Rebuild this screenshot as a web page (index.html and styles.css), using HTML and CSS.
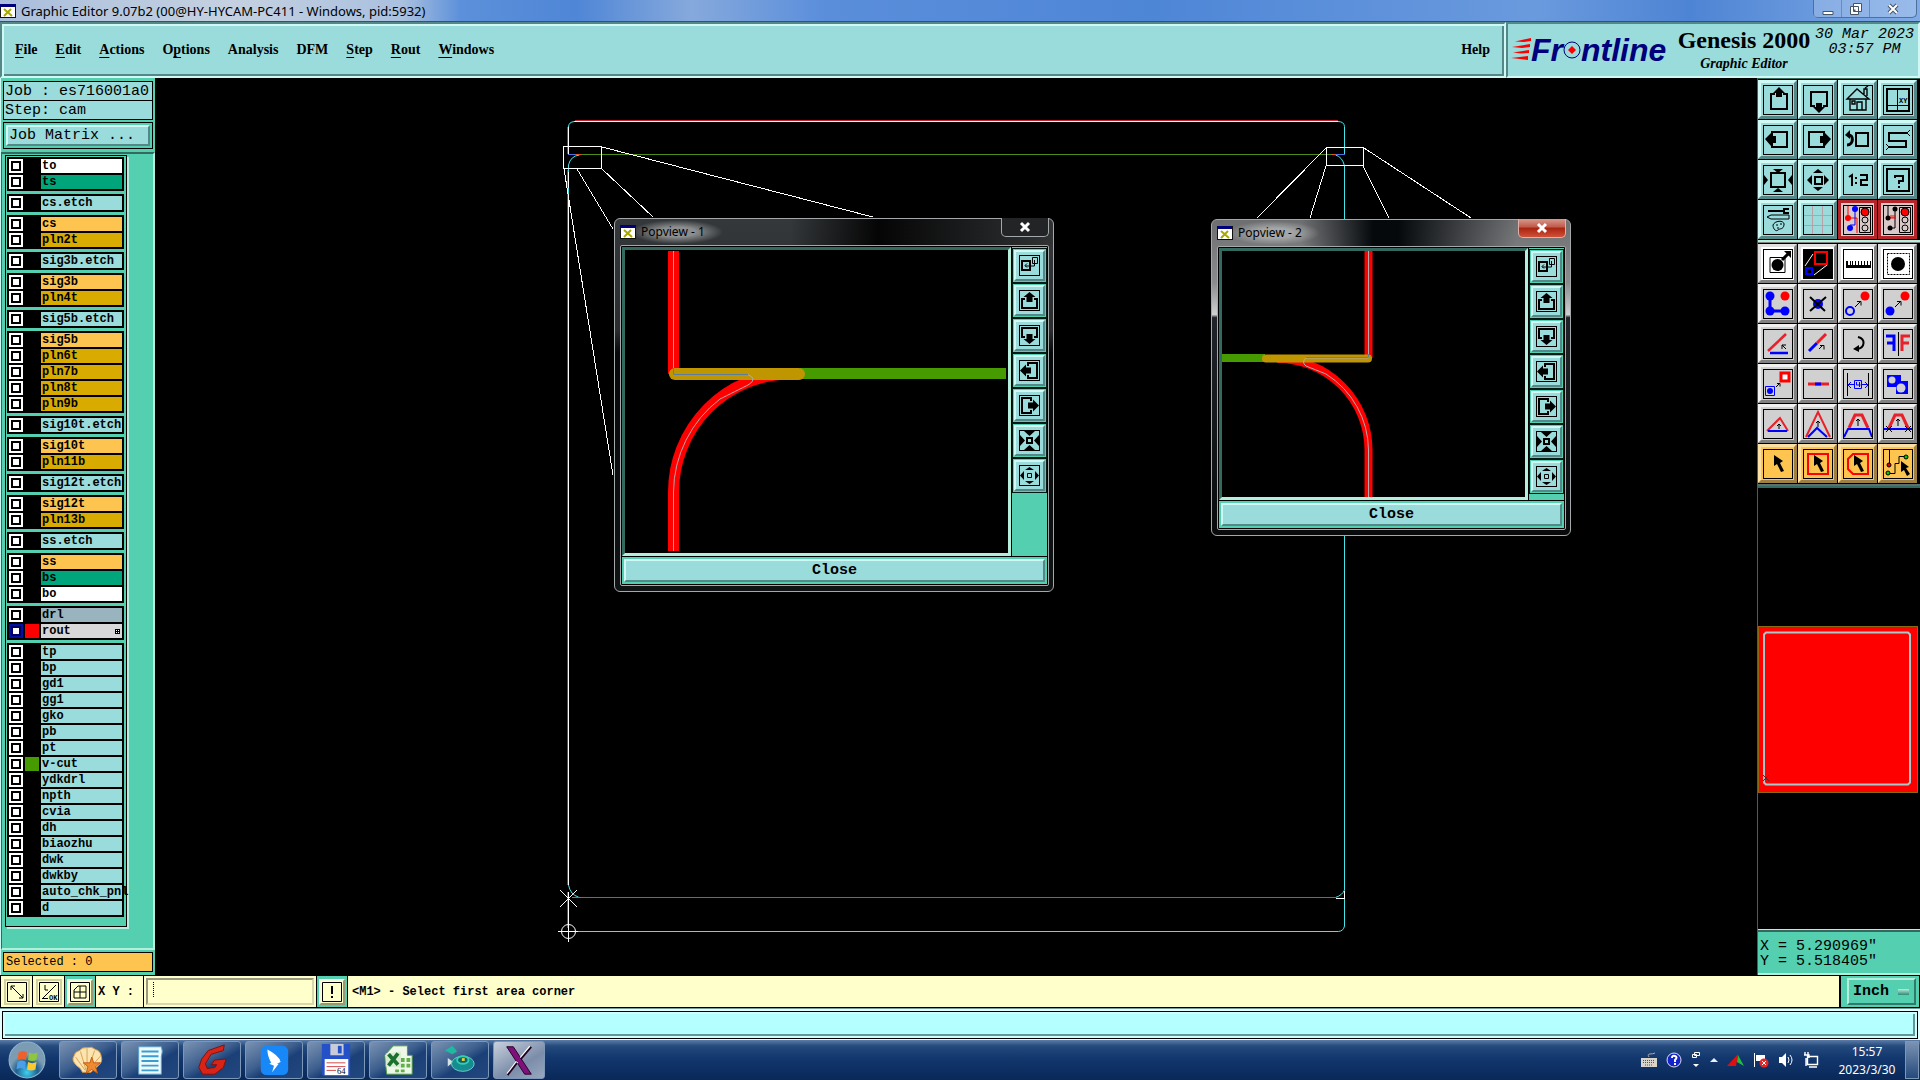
FILE: index.html
```html
<!DOCTYPE html>
<html lang="en">
<head>
<meta charset="utf-8">
<title>Graphic Editor 9.07b2</title>
<link rel="stylesheet" href="styles.css">
</head>
<body>
<svg class="defs" aria-hidden="true">
  <symbol id="xwin" viewBox="0 0 16 14"><path d="M0 0h16v14H0z" fill="#111"/><path d="M0 0h15v3H0z" fill="#00007c"/><path d="M1 3h14v10H1z" fill="#fff"/><path d="M4 5l8 7M11 5l-7 7" stroke="#a8a800" stroke-width="2"/></symbol>
  <symbol id="up" viewBox="0 0 30 30"><path d="M12 9H8v15h16V9h-4" fill="none" stroke="#000" stroke-width="2"/><path d="M16 2l6 6h-3v4h-6V8h-3z"/></symbol>
  <symbol id="down" viewBox="0 0 30 30"><path d="M12 21H8V7h16v14h-4" fill="none" stroke="#000" stroke-width="2"/><path d="M16 28l6-6h-3v-4h-6v4h-3z"/></symbol>
  <symbol id="left" viewBox="0 0 30 30"><path d="M9 11V7h15v15H9v-4" fill="none" stroke="#000" stroke-width="2"/><path d="M2 14l6-6v3h5v7H8v3z"/></symbol>
  <symbol id="right" viewBox="0 0 30 30"><path d="M21 11V7H6v15h15v-4" fill="none" stroke="#000" stroke-width="2"/><path d="M28 14l-6-6v3h-5v7h5v3z"/></symbol>
  <symbol id="pup" viewBox="0 0 21 21"><path d="M6 9H3v9h15V9h-3" fill="none" stroke="#000" stroke-width="2"/><path d="M10.500 2l6 5h-3v5h-6V7h-3z"/></symbol>
  <symbol id="pdown" viewBox="0 0 21 21"><path d="M6 12H3V3h15v9h-3" fill="none" stroke="#000" stroke-width="2"/><path d="M10.500 19l6-5h-3V9h-6v5h-3z"/></symbol>
  <symbol id="pleft" viewBox="0 0 21 21"><path d="M9 6V3h9v15H9v-3" fill="none" stroke="#000" stroke-width="2"/><path d="M1 10.500l6-6v3h5v6H7v3z"/></symbol>
  <symbol id="pright" viewBox="0 0 21 21"><path d="M12 6V3H3v15h9v-3" fill="none" stroke="#000" stroke-width="2"/><path d="M20 10.500l-6-6v3H9v6h5v3z"/></symbol>
  <symbol id="home" viewBox="0 0 30 30"><path d="M7 14v11h16V14M4 14L14 4l12 10zM14 25v-8h5v8M9 16h3v3H9zM21 9V4h3v7M22 3l3-2" fill="none" stroke="#000" stroke-width="1.4"/></symbol>
  <symbol id="back" viewBox="0 0 30 30"><path d="M13 8h12v13H13z" fill="none" stroke="#000" stroke-width="2"/><path d="M5 10c6-1 6 10-1 10" fill="none" stroke="#000" stroke-width="3"/><path d="M2 10l5-5v9z"/></symbol>
  <symbol id="serp" viewBox="0 0 30 30"><path d="M24 8H6v8h17v6H6" fill="none" stroke="#000" stroke-width="2"/><path d="M27 5l-3 3 3 3M3 19l3 3-3 3" fill="none" stroke="#000"/></symbol>
  <symbol id="zin" viewBox="0 0 30 30"><path d="M8 8h14v14H8z" fill="none" stroke="#000" stroke-width="2"/><path d="M10 4h10l-5 4zM10 27h10l-5-4zM1 10v10l4-5zM29 10v10l-4-5z"/></symbol>
  <symbol id="zshrink" viewBox="0 0 21 21"><path d="M8 8h5v5H8z" fill="none" stroke="#000" stroke-width="2"/><path d="M5 1h11l-5.500 5zM5 20h11l-5.500-5zM1 5v11l5-5.500zM20 5v11l-5-5.500z"/></symbol>
  <symbol id="zout" viewBox="0 0 30 30"><path d="M12 12h7v7h-7z" fill="none" stroke="#000" stroke-width="2"/><path d="M10 8h10l-5-4zM10 22h10l-5 4zM9 10v10l-5-5zM21 10v10l5-5z"/></symbol>
  <symbol id="pzout" viewBox="0 0 21 21"><path d="M8.500 8.500h4v4h-4z" fill="none" stroke="#000"/><path d="M6 5h9l-4.500-3zM6 16h9l-4.500 3zM5 6v9l-4-4.500zM16 6v9l4-4.500z"/></symbol>
  <symbol id="ratio" viewBox="0 0 30 30"><path d="M6 12l3-2v11M17 10h7v5h-6v5h7" fill="none" stroke="#000" stroke-width="2"/><path d="M12 12h2v2h-2zM12 17h2v2h-2z"/></symbol>
  <symbol id="help" viewBox="0 0 30 30"><path d="M4 4h22v22H4z" fill="none" stroke="#000" stroke-width="2"/><path d="M12 13v-2h8v5h-4v3" fill="none" stroke="#000" stroke-width="2"/><path d="M15 21h2v2h-2z"/></symbol>
  <symbol id="tools" viewBox="0 0 30 30"><path d="M5 6h15" stroke="#000" stroke-width="2"/><path d="M26 4h-5v4h5" fill="none" stroke="#000" stroke-width="2"/><path d="M4 12l4-2h18v4H8zM10 20c2-5 12-5 11 0s-4 3-6 5-5-1-5-5z" fill="none" stroke="#000"/><path d="M13 20h2M17 19h2M14 23h2" stroke="#000"/></symbol>
  <symbol id="grid" viewBox="0 0 30 30"><path d="M9.500 1v28M19.500 1v28M1 10.500h28M1 20.500h28" stroke="#b8a0a8"/></symbol>
  <symbol id="sig1" viewBox="0 0 30 30"><path d="M5 1v12h9v15" fill="none" stroke="#f00"/><path d="M12 4v16H7" fill="none" stroke="#00f"/><circle cx="5" cy="13" r="3" fill="#f00"/><circle cx="12" cy="4" r="3" fill="#00f"/><circle cx="7" cy="23" r="3" fill="#00f"/><path d="M16.500 2.500h11v25h-11z" fill="none" stroke="#000"/><circle cx="22" cy="7" r="4" fill="#f00" stroke="#000"/><circle cx="22" cy="15" r="3" fill="none" stroke="#000"/><circle cx="22" cy="23" r="3" fill="none" stroke="#000"/></symbol>
  <symbol id="sig2" viewBox="0 0 30 30"><path d="M5 1v12M12 4v19H7" fill="none" stroke="#000"/><path d="M6 13h7M8 10v3M10 10v3M12 10v3" stroke="#f00"/><circle cx="5" cy="13" r="2.500"/><circle cx="12" cy="4" r="2.500"/><circle cx="7" cy="23" r="2.500"/><path d="M16.500 2.500h11v25h-11z" fill="none" stroke="#000"/><circle cx="22" cy="7" r="4" fill="#f00" stroke="#000"/><circle cx="22" cy="15" r="3" fill="none" stroke="#000"/><circle cx="22" cy="23" r="3" fill="none" stroke="#000"/></symbol>
  <symbol id="selarr" viewBox="0 0 30 30"><path d="M7 8.500h15v15H7z" fill="none" stroke="#000"/><circle cx="14.500" cy="16" r="6"/><path d="M19 11l6-6" stroke="#000" stroke-width="3"/><path d="M21 2h7v7z"/></symbol>
  <symbol id="pop" viewBox="0 0 30 30"><path d="M0 0h30v30H0z"/><path d="M10 5L2 17M24 16L11 26" stroke="#fff"/><path d="M12 3h12v12H12z" fill="none" stroke="#f00" stroke-width="2"/><path d="M3 19h6v6H3z" fill="none" stroke="#00f" stroke-width="2"/></symbol>
  <symbol id="ruler" viewBox="0 0 30 30"><path d="M3 19h25v-7h-1v4h-2v-4h-1v4h-2v-4h-1v4h-2v-4h-1v4h-2v-4h-1v4h-2v-4h-1v4h-2v-4h-1v4H8v-4H7v4H5v-4H3z"/></symbol>
  <symbol id="dot" viewBox="0 0 30 30"><path d="M4.500 4.500h22v21h-22z" fill="none" stroke="#000" stroke-dasharray="2 1"/><circle cx="15" cy="15" r="7"/></symbol>
  <symbol id="net" viewBox="0 0 30 30"><path d="M7 7v15h15" fill="none" stroke="#00f" stroke-width="3"/><g fill="#00f"><circle cx="7" cy="7" r="4.500"/><circle cx="7" cy="22" r="4.500"/><circle cx="22" cy="22" r="4.500"/></g><circle cx="22" cy="7" r="4.500" fill="#f00"/></symbol>
  <symbol id="del" viewBox="0 0 30 30"><circle cx="15" cy="15" r="5" fill="#00f"/><path d="M7 8l15 14M23 8L7 22" stroke="#000" stroke-width="2"/></symbol>
  <symbol id="move" viewBox="0 0 30 30"><circle cx="7" cy="22" r="4" fill="none" stroke="#00f" stroke-width="2"/><circle cx="22" cy="7" r="4.500" fill="#f00"/><path d="M12 18l5-5M14 12.500h4v4" fill="none" stroke="#000"/></symbol>
  <symbol id="copy" viewBox="0 0 30 30"><circle cx="7" cy="22" r="4.500" fill="#00f"/><circle cx="22" cy="7" r="4.500" fill="#f00"/><path d="M12 18l5-5M14 12.500h4v4" fill="none" stroke="#000"/></symbol>
  <symbol id="angle" viewBox="0 0 30 30"><path d="M5 22L23 5" stroke="#e8202a" stroke-width="2.500"/><path d="M7 24h18" stroke="#00f" stroke-width="2.500"/><path d="M23 20l-4-4M19 20v-4h4" fill="none" stroke="#000"/></symbol>
  <symbol id="stretch" viewBox="0 0 30 30"><path d="M6 22l8-8" stroke="#00f" stroke-width="3"/><path d="M14 14l9-9" stroke="#e8202a" stroke-width="3"/><path d="M16 20l4-4M17 16.500h4v4" fill="none" stroke="#000"/></symbol>
  <symbol id="rot" viewBox="0 0 30 30"><path d="M15 8c8 2 7 11-1 12" fill="none" stroke="#000" stroke-width="2"/><path d="M10 20l6-4v7z"/></symbol>
  <symbol id="mirror" viewBox="0 0 30 30"><path d="M3 7h8v15M4 14h7" fill="none" stroke="#00f" stroke-width="3"/><path d="M27 7h-8v15M26 14h-7" fill="none" stroke="#e8202a" stroke-width="3"/><path d="M15.500 3v24" stroke="#000"/></symbol>
  <symbol id="resize" viewBox="0 0 30 30"><path d="M18 4h8v8h-8z" fill="#fff" stroke="#f00" stroke-width="3"/><path d="M2.500 17.500h9v9h-9z" fill="none" stroke="#00f"/><circle cx="7" cy="22" r="3" fill="#00f"/><path d="M13 18l3-3M14 14.500h3v3" fill="none" stroke="#000"/></symbol>
  <symbol id="line" viewBox="0 0 30 30"><path d="M5 15h21" stroke="#e8202a" stroke-width="3"/><path d="M12 15h6" stroke="#00f" stroke-width="3"/></symbol>
  <symbol id="gap" viewBox="0 0 30 30"><path d="M4.500 4v23M25.500 4v23" stroke="#000"/><path d="M11.500 11.500h7v8h-7zM5 15.500h6M19 15.500h6M8 13l-3 3 3 3M22 13l3 3-3 3M13.500 13v3h4M16.500 13v5" fill="none" stroke="#00f"/></symbol>
  <symbol id="union" viewBox="0 0 30 30"><path d="M4 6h14v6h7v13H13v-7H4z" fill="#00f"/><circle cx="9" cy="11" r="3.500" fill="#d0d0d0"/><circle cx="18" cy="19" r="4.500" fill="#d0d0d0"/></symbol>
  <symbol id="tri" viewBox="0 0 30 30"><path d="M4 22L17 9l8 13" fill="none" stroke="#e8202a" stroke-width="2"/><path d="M5 22h19" stroke="#00f" stroke-width="2"/><path d="M16 20v-5M14 17l2-2 2 2" fill="none" stroke="#000"/></symbol>
  <symbol id="peak" viewBox="0 0 30 30"><path d="M3 28L15 3l12 25" fill="none" stroke="#e8202a" stroke-width="2"/><path d="M5 28l9-9 10 9" fill="none" stroke="#00f" stroke-width="2"/><path d="M15 18v-6M13 14l2-2 2 2" fill="none" stroke="#000"/></symbol>
  <symbol id="trap" viewBox="0 0 30 30"><path d="M6 19l6-13h7l6 13" fill="none" stroke="#e8202a" stroke-width="3"/><path d="M1 28l4-8h21l3 8" fill="none" stroke="#00f" stroke-width="2"/><path d="M15 17v-7M13 12l2-2 2 2" fill="none" stroke="#000"/></symbol>
  <symbol id="trapx" viewBox="0 0 30 30"><path d="M6 19l6-13h7l6 13" fill="none" stroke="#e8202a" stroke-width="3"/><path d="M1 20h28" stroke="#00f" stroke-width="2"/><path d="M15 17v-7M13 12l2-2 2 2M3 17l6 6M9 17l-6 6M22 17l6 6M28 17l-6 6" fill="none" stroke="#000"/></symbol>
  <symbol id="cur" viewBox="0 0 30 30"><path d="M11 6l9 6-3 2 4 8-3 1-4-8-3 2z"/></symbol>
  <symbol id="curbox" viewBox="0 0 30 30"><path d="M5 5h20v20H5z" fill="none" stroke="#f00" stroke-width="2"/><path d="M11 6l9 6-3 2 4 8-3 1-4-8-3 2z"/></symbol>
  <symbol id="curpoly" viewBox="0 0 30 30"><path d="M10 5h15v20H10l-5-5V10z" fill="none" stroke="#f00" stroke-width="2"/><path d="M11 6l9 6-3 2 4 8-3 1-4-8-3 2z"/></symbol>
  <symbol id="curnet" viewBox="0 0 30 30"><path d="M6.500 1v14M6 24.500h6v-10h4V7.500h6" fill="none" stroke="#000"/><circle cx="6" cy="16" r="2" fill="#d00" stroke="#000"/><circle cx="5" cy="24" r="2" fill="#0c0" stroke="#000"/><circle cx="23" cy="8" r="2" fill="#0c0" stroke="#000"/><path d="M18 12l8 6-3 1 4 6-3 2-3-6-3 2z"/></symbol>
  <symbol id="link" viewBox="0 0 21 21"><path d="M3 6h8v9H3z" fill="none" stroke="#000" stroke-width="2"/><path d="M13.500 2.500h5v6h-5zM15.500 5v6H6M8 8.500l-2 2 2 2" fill="none" stroke="#000"/></symbol>
</svg>

<header class="titlebar">
  <svg class="app-icon"><use href="#xwin"/></svg>
  <h1>Graphic Editor 9.07b2 (00@HY-HYCAM-PC411 - Windows, pid:5932)</h1>
  <div class="win-controls">
    <button aria-label="Minimize"><svg width="12" height="12"><path d="M1 8.500h10v3H1z" fill="#fff" stroke="#456"/></svg></button>
    <button aria-label="Restore"><svg width="12" height="12"><path d="M3.500.5h8v8h-8zM.5 3.500h8v8h-8z" fill="#fff" stroke="#456"/><path d="M3.500 6.500h2v2h-2z" fill="#456"/></svg></button>
    <button class="wide" aria-label="Close"><svg width="12" height="12"><path d="M2 2l8 8M10 2l-8 8" stroke="#456" stroke-width="4"/><path d="M2 2l8 8M10 2l-8 8" stroke="#fff" stroke-width="2"/></svg></button>
  </div>
</header>

<div class="topbar">
  <nav class="menubar">
    <a href="#"><u>F</u>ile</a><a href="#"><u>E</u>dit</a><a href="#"><u>A</u>ctions</a><a href="#">O<u>p</u>tions</a><a href="#">Analysis</a><a href="#">DFM</a><a href="#"><u>S</u>tep</a><a href="#"><u>R</u>out</a><a href="#"><u>W</u>indows</a><a class="menu-help" href="#">Help</a>
  </nav>
  <div class="brand">
    <div class="logo">
      <svg width="20" height="24" fill="#f00"><path d="M4 3.500L20 0v3l-7 1zM1 9l18-3v3l-8 1zM2 14.500L18 12v3l-8 .5zM0 20l17-2v4l-8-1z"/></svg>
      <span>Fr<svg width="18" height="26" viewBox="0 0 18 26"><circle cx="9" cy="13" r="8" fill="none" stroke="#00007c"/><path d="M9 9l4 4-4 4-4-4z" fill="#f00"/></svg>ntline</span>
    </div>
    <div class="product"><strong>Genesis 2000</strong><em>Graphic Editor</em></div>
    <div class="date">30 Mar 2023<br>03:57 PM</div>
  </div>
</div>

<main class="workspace">
  <aside class="layers-panel">
    <div class="job"><p>Job : es716001a0</p><p>Step: cam</p></div>
    <div class="matrix"><button>Job Matrix ...</button></div>
    <div class="layer-well">
      <div class="layer-list">
        <div class="group">
          <label class="layer white"><input type="checkbox"><i></i><span>to</span></label>
          <label class="layer green"><input type="checkbox"><i></i><span>ts</span></label>
        </div>
        <div class="group"><label class="layer"><input type="checkbox"><i></i><span>cs.etch</span></label></div>
        <div class="group">
          <label class="layer amber"><input type="checkbox"><i></i><span>cs</span></label>
          <label class="layer gold"><input type="checkbox"><i></i><span>pln2t</span></label>
        </div>
        <div class="group"><label class="layer"><input type="checkbox"><i></i><span>sig3b.etch</span></label></div>
        <div class="group">
          <label class="layer amber"><input type="checkbox"><i></i><span>sig3b</span></label>
          <label class="layer gold"><input type="checkbox"><i></i><span>pln4t</span></label>
        </div>
        <div class="group"><label class="layer"><input type="checkbox"><i></i><span>sig5b.etch</span></label></div>
        <div class="group">
          <label class="layer amber"><input type="checkbox"><i></i><span>sig5b</span></label>
          <label class="layer gold"><input type="checkbox"><i></i><span>pln6t</span></label>
          <label class="layer gold"><input type="checkbox"><i></i><span>pln7b</span></label>
          <label class="layer gold"><input type="checkbox"><i></i><span>pln8t</span></label>
          <label class="layer gold"><input type="checkbox"><i></i><span>pln9b</span></label>
        </div>
        <div class="group"><label class="layer"><input type="checkbox"><i></i><span>sig10t.etch</span></label></div>
        <div class="group">
          <label class="layer amber"><input type="checkbox"><i></i><span>sig10t</span></label>
          <label class="layer gold"><input type="checkbox"><i></i><span>pln11b</span></label>
        </div>
        <div class="group"><label class="layer"><input type="checkbox"><i></i><span>sig12t.etch</span></label></div>
        <div class="group">
          <label class="layer amber"><input type="checkbox"><i></i><span>sig12t</span></label>
          <label class="layer gold"><input type="checkbox"><i></i><span>pln13b</span></label>
        </div>
        <div class="group"><label class="layer"><input type="checkbox"><i></i><span>ss.etch</span></label></div>
        <div class="group">
          <label class="layer amber"><input type="checkbox"><i></i><span>ss</span></label>
          <label class="layer green"><input type="checkbox"><i></i><span>bs</span></label>
          <label class="layer white"><input type="checkbox"><i></i><span>bo</span></label>
        </div>
        <div class="group">
          <label class="layer slate"><input type="checkbox"><i></i><span>drl</span></label>
          <label class="layer grey"><input type="checkbox" checked><i class="red"></i><span>rout<svg width="5" height="5" viewBox="0 0 5 5"><path d="M0 0h5v5H0z"/><path d="M1 1h1v1H1zM3 1h1v1H3zM1 3h1v1H1zM3 3h1v1H3z" fill="#fff"/></svg></span></label>
        </div>
        <div class="group">
          <label class="layer"><input type="checkbox"><i></i><span>tp</span></label>
          <label class="layer"><input type="checkbox"><i></i><span>bp</span></label>
          <label class="layer"><input type="checkbox"><i></i><span>gd1</span></label>
          <label class="layer"><input type="checkbox"><i></i><span>gg1</span></label>
          <label class="layer"><input type="checkbox"><i></i><span>gko</span></label>
          <label class="layer"><input type="checkbox"><i></i><span>pb</span></label>
          <label class="layer"><input type="checkbox"><i></i><span>pt</span></label>
          <label class="layer"><input type="checkbox"><i class="lime"></i><span>v-cut</span></label>
          <label class="layer"><input type="checkbox"><i></i><span>ydkdrl</span></label>
          <label class="layer"><input type="checkbox"><i></i><span>npth</span></label>
          <label class="layer"><input type="checkbox"><i></i><span>cvia</span></label>
          <label class="layer"><input type="checkbox"><i></i><span>dh</span></label>
          <label class="layer"><input type="checkbox"><i></i><span>biaozhu</span></label>
          <label class="layer"><input type="checkbox"><i></i><span>dwk</span></label>
          <label class="layer"><input type="checkbox"><i></i><span>dwkby</span></label>
          <label class="layer"><input type="checkbox"><i></i><span>auto_chk_pnl</span></label>
          <label class="layer"><input type="checkbox"><i></i><span>d</span></label>
        </div>
      </div>
    </div>
    <p class="selected">Selected : 0</p>
  </aside>

  <section class="canvas">
    <svg class="board" viewBox="156 78 1601 897" preserveAspectRatio="xMinYMin meet" fill="none">
      <g stroke="#c8202c"><path d="M575 120.500H1338M567.500 127V154M567.500 170V885M567.500 892V928"/></g>
      <g stroke="#fff"><path d="M574 121.500H1338M568.500 126V154M568.500 168V885M568.500 892V928"/></g>
      <g stroke="#44e4ea"><path d="M568.500 127q0-5 6-5.500M1338 121.500q6 0 6.500 5V154M568.500 172V165q2-9 11-10M1344.500 172V890q-2 5-9 7.500M568.500 885q2 10 10 12M1344.500 897V926q-1 5-6 5.500H568M1344.500 172v-6q-2-9-9-11M568.500 188v8"/></g>
      <path d="M580 154.500H1333M578 897.500H1336" stroke="#4b8c1c"/>
      <path d="M568 154.500h8M1336 154.500h9" stroke="#5070e0"/>
      <path d="M576 154.500h5M1331 154.500h5M572 897.500h9" stroke="#e05020"/>
      <g stroke="#fff" shape-rendering="crispEdges">
        <path d="M563.500 146.500h38v22h-38zM1326.500 147.500h37v18h-37z"/>
        <path d="M602 147L873 217M602 169L653 217M577 169L613 229M564 169L613 475M1326 148L1257 218M1326 166L1310 218M1363 166L1389 218M1364 148L1471 218"/>
        <path d="M560 890l17 17M577 890l-17 17M558 931.500h20M568.500 921v21M1336 898.500h8v-8"/>
      </g>
      <circle cx="568.500" cy="931.500" r="7" stroke="#fff"/>
    </svg>

    <article class="popview pop1">
      <header><svg class="app-icon"><use href="#xwin"/></svg><h2>Popview - 1</h2><button class="pop-x" aria-label="Close window"><svg width="12" height="12"><path d="M2 2l8 8M10 2l-8 8" stroke="#fff" stroke-width="3"/></svg></button></header>
      <div class="pop-client">
        <div class="pop-body">
          <svg class="pop-view" viewBox="625 250 383 303" preserveAspectRatio="xMinYMin slice" fill="none">
            <path d="M673.500 251V374M673.500 551V492A117 118 0 0 1 790 374" stroke="#f00" stroke-width="11"/>
            <path d="M800 373.500H1006" stroke="#459b00" stroke-width="11"/>
            <path d="M675 374H799" stroke="#bf9600" stroke-width="12" stroke-linecap="round"/>
            <path d="M673.500 551V492A117 118 0 0 1 720 399L748 385q7-4 4-8l-4-2.500H673.500V251" stroke="#b4a9a9"/>
            <path d="M748 374.500H673.500V368" stroke="#5a7ca0"/>
          </svg>
          <div class="pop-tools">
            <button aria-label="Link"><svg><use href="#link"/></svg></button><button aria-label="Up"><svg><use href="#pup"/></svg></button><button aria-label="Down"><svg><use href="#pdown"/></svg></button><button aria-label="Left"><svg><use href="#pleft"/></svg></button><button aria-label="Right"><svg><use href="#pright"/></svg></button><button aria-label="Zoom in"><svg><use href="#zshrink"/></svg></button><button aria-label="Zoom out"><svg><use href="#pzout"/></svg></button>
          </div>
        </div>
        <div class="pop-foot"><button>Close</button></div>
      </div>
    </article>

    <article class="popview pop2">
      <header><svg class="app-icon"><use href="#xwin"/></svg><h2>Popview - 2</h2><button class="pop-x hot" aria-label="Close window"><svg width="12" height="12"><path d="M2 2l8 8M10 2l-8 8" stroke="#fff" stroke-width="3"/></svg></button></header>
      <div class="pop-client">
        <div class="pop-body">
          <svg class="pop-view" viewBox="1223 252 303 246" preserveAspectRatio="xMinYMin slice" fill="none">
            <path d="M1369.500 252V359M1369.500 498V451A91 91 0 0 0 1278 360" stroke="#f00" stroke-width="8"/>
            <path d="M1223 359H1266" stroke="#459b00" stroke-width="8"/>
            <path d="M1267 359.500H1369" stroke="#bf9600" stroke-width="8" stroke-linecap="round"/>
            <path d="M1369.500 498V451A91 91 0 0 0 1327 375L1307 367q-5-4 0-8h62.500V252" stroke="#b4a9a9"/>
            <path d="M1307 358.500h62.500V355" stroke="#6a8088"/>
          </svg>
          <div class="pop-tools">
            <button aria-label="Link"><svg><use href="#link"/></svg></button><button aria-label="Up"><svg><use href="#pup"/></svg></button><button aria-label="Down"><svg><use href="#pdown"/></svg></button><button aria-label="Left"><svg><use href="#pleft"/></svg></button><button aria-label="Right"><svg><use href="#pright"/></svg></button><button aria-label="Zoom in"><svg><use href="#zshrink"/></svg></button><button aria-label="Zoom out"><svg><use href="#pzout"/></svg></button>
          </div>
        </div>
        <div class="pop-foot"><button>Close</button></div>
      </div>
    </article>
  </section>

  <aside class="tools-panel">
    <div class="tools">
      <button aria-label="Pan up"><svg><use href="#up"/></svg></button><button aria-label="Pan down"><svg><use href="#down"/></svg></button><button aria-label="Home"><svg><use href="#home"/></svg></button><button aria-label="Zoom to XY"><svg viewBox="0 0 30 30"><path d="M4 4h22v22H4z" fill="none" stroke="#000" stroke-width="2"/><path d="M14.500 4v22M4 20.500h22" stroke="#000"/><text x="16" y="18" font-size="7">XY</text></svg></button>
      <button aria-label="Pan left"><svg><use href="#left"/></svg></button><button aria-label="Pan right"><svg><use href="#right"/></svg></button><button aria-label="Previous view"><svg><use href="#back"/></svg></button><button aria-label="Serpentine"><svg><use href="#serp"/></svg></button>
      <button aria-label="Zoom in"><svg><use href="#zin"/></svg></button><button aria-label="Zoom out"><svg><use href="#zout"/></svg></button><button aria-label="Scale"><svg><use href="#ratio"/></svg></button><button aria-label="Help"><svg><use href="#help"/></svg></button>
      <button aria-label="Setup"><svg><use href="#tools"/></svg></button><button aria-label="Grid"><svg><use href="#grid"/></svg></button><button class="alert" aria-label="Online nets"><svg><use href="#sig1"/></svg></button><button class="alert" aria-label="Online checks"><svg><use href="#sig2"/></svg></button>
    </div>
    <div class="tools edit">
      <button class="plain" aria-label="Select"><svg><use href="#selarr"/></svg></button><button class="plain" aria-label="Popview"><svg><use href="#pop"/></svg></button><button class="plain" aria-label="Measure"><svg><use href="#ruler"/></svg></button><button class="plain" aria-label="Highlight"><svg><use href="#dot"/></svg></button>
      <button aria-label="Add"><svg><use href="#net"/></svg></button><button aria-label="Delete"><svg><use href="#del"/></svg></button><button aria-label="Move"><svg><use href="#move"/></svg></button><button aria-label="Copy"><svg><use href="#copy"/></svg></button>
      <button aria-label="Angle"><svg><use href="#angle"/></svg></button><button aria-label="Stretch"><svg><use href="#stretch"/></svg></button><button aria-label="Rotate"><svg><use href="#rot"/></svg></button><button aria-label="Mirror"><svg><use href="#mirror"/></svg></button>
      <button aria-label="Resize"><svg><use href="#resize"/></svg></button><button aria-label="Break"><svg><use href="#line"/></svg></button><button aria-label="Spacing"><svg><use href="#gap"/></svg></button><button aria-label="Combine"><svg><use href="#union"/></svg></button>
      <button aria-label="Triangle"><svg><use href="#tri"/></svg></button><button aria-label="Peak"><svg><use href="#peak"/></svg></button><button aria-label="Trapezoid"><svg><use href="#trap"/></svg></button><button aria-label="Cut trapezoid"><svg><use href="#trapx"/></svg></button>
      <button class="pick" aria-label="Pick"><svg><use href="#cur"/></svg></button><button class="pick" aria-label="Pick in box"><svg><use href="#curbox"/></svg></button><button class="pick" aria-label="Pick in polygon"><svg><use href="#curpoly"/></svg></button><button class="pick" aria-label="Pick net"><svg><use href="#curnet"/></svg></button>
    </div>
    <div class="overview">
      <svg viewBox="0 0 160 167" fill="none"><path d="M0 0h160v167H0z" fill="#f00"/><path d="M.5.500h159v166H.5z" stroke="#8a6a10"/><path d="M8 6.500h142l2 2v148l-2 2H8l-2-2v-148z" stroke="#a8c8cc" stroke-width="2"/><path d="M5 149l6 6M11 149l-6 6" stroke="#602020"/></svg>
    </div>
    <div class="coords">X = 5.290969"<br>Y = 5.518405"</div>
  </aside>
</main>

<form class="prompt">
  <button type="button" class="mode" aria-label="Absolute"><svg viewBox="0 0 20 20"><path d="M.5.500h19v19H.5zM4 4l12 12M4 8V4h4M16 12v4h-4" fill="none" stroke="#000"/></svg></button>
  <button type="button" class="mode" aria-label="Angle snap"><svg viewBox="0 0 20 20"><path d="M.5.500h19v19H.5zM3 17L17 3M3 16.500h6M6 3v5h3" fill="none" stroke="#000"/><text x="10" y="18" font-size="7">OK</text></svg></button>
  <button type="button" class="mode boxed" aria-label="Grid snap"><svg viewBox="0 0 20 20"><path d="M.5.500h19v19H.5zM8 4h8v12H4V8zM10 4v12M4 10h12" fill="none" stroke="#000"/></svg></button>
  <label for="xy-in">X Y :</label>
  <div class="entry"><input id="xy-in" type="text"></div>
  <button type="button" class="mode boxed" aria-label="Alert"><svg viewBox="0 0 20 20"><path d="M.5.500h19v19H.5z" fill="none" stroke="#000"/><path d="M9 4h2v8H9zM9 14h2v2H9z"/></svg></button>
  <output>&lt;M1&gt; - Select first area corner</output>
  <div class="units"><select aria-label="Units"><option>Inch</option></select></div>
</form>
<div class="status"><div><p></p></div></div>

<footer class="taskbar">
  <button class="orb" aria-label="Start"><svg viewBox="0 0 36 36"><defs><radialGradient id="og" cy=".85"><stop offset="0" stop-color="#3fd0f0"/><stop offset=".6" stop-color="#20608f"/><stop offset="1" stop-color="#7c9cb4"/></radialGradient></defs><circle cx="18" cy="18" r="17" fill="url(#og)" stroke="#8fb4cc"/><path d="M10 11q4-3 8 0l-1 7q-4-2-8 0z" fill="#f0602a"/><path d="M20 11q4 2 8 0l-1 7q-4 2-8 0z" fill="#8ec63f"/><path d="M9 20q4-3 8 0l-1 7q-4-3-8 0z" fill="#4aa0e8"/><path d="M19 20q4 2 8 0l-1 7q-4 2-8 0z" fill="#fcc830"/></svg></button>
  <button aria-label="Shell"><svg viewBox="0 0 36 36"><path d="M12 31q-1-4-6-7Q0 18 3 14q1-5 6-6 3-4 8-3 5-2 9 2 5 1 6 7 2 6-3 10-5 4-8 7z" fill="#fbe4b0" stroke="#d89a40"/><path d="M15 29L5 15M16 29L10 9M17 28L17 6M18 28L25 8M19 28L31 14" stroke="#d8a050"/><path d="M22 15l2 6 7 0-5 4 2 7-6-4-6 4 2-7-5-4 7 0z" fill="#f08a30" stroke="#c05a14"/></svg></button>
  <button aria-label="Notes"><svg viewBox="0 0 36 36"><path d="M6 4h24q2 5 0 10v19H6z" fill="#eafaff" stroke="#5aa0c8"/><path d="M9 9h18M9 14h18M9 19h18M9 24h18M9 29h18" stroke="#3c9cd0" stroke-width="2"/></svg></button>
  <button aria-label="Genesis"><svg viewBox="0 0 36 36"><path d="M31 2L30 8 17 12 11 22l2 5 8-1 2-3h-6l4-5 12-1-3 9-9 7H8L4 26 7 17 14 8z" fill="#d82418" stroke="#801008"/></svg></button>
  <button aria-label="DingTalk"><svg viewBox="0 0 36 36"><rect x="4" y="3" width="29" height="31" rx="6" fill="#1888f8"/><path d="M11 7q12 6 14 13l-4 2 2 0-7 9 2-7-5-2 2-1q-4-7-4-14z" fill="#fff"/></svg></button>
  <button aria-label="Save tool"><svg viewBox="0 0 36 36"><path d="M3 1h30v34H5l-2-2z" fill="#2450c8"/><path d="M12 1h14v12H12z" fill="#c8ccd8"/><path d="M20 3h4v8h-4z" fill="#2450c8"/><path d="M6 17h25v17H6z" fill="#fff"/><path d="M8 21h20M8 25h20M8 29h10" stroke="#d04040"/><text x="19" y="33" font-size="9">64</text></svg></button>
  <button aria-label="Excel"><svg viewBox="0 0 36 36"><path d="M4 13L13 3h15v10h5v20H6z" fill="#eef8e8" stroke="#4c9a40"/><path d="M21 16h4v4h-4zM27 16h4v4h-4zM21 22h4v4h-4zM27 22h4v4h-4zM15 28h4v3h-4zM21 28h4v3h-4z" fill="#60b048"/><path d="M5 11l16-2v17L5 25z" fill="#d8ecd0"/><path d="M8 12l10 11M18 11L8 24" stroke="#1c7030" stroke-width="4"/></svg></button>
  <button aria-label="CAM tool"><svg viewBox="0 0 36 36"><path d="M2 8l8-5 5 6-5 3z" fill="#20b8a0"/><path d="M5 16l6 4-6 5z" fill="#d0e4e4"/><ellipse cx="21" cy="22" rx="12" ry="8" fill="#148c90" stroke="#70d0c8"/><ellipse cx="21" cy="18" rx="6" ry="4" fill="#106068" stroke="#30d0b0" stroke-width="2"/><path d="M20 19v-3h3v3z" fill="#e8d040"/></svg></button>
  <button class="active" aria-label="X server"><svg viewBox="0 0 36 36"><path d="M5 4h7l19 29h-7z" fill="#80107c" stroke="#200020"/><path d="M30 4L20 16M16 20L6 33" stroke="#fff" stroke-width="3"/><path d="M31 4L20 17M16 21L6 34" stroke="#200020" stroke-width="2"/></svg></button>
  <div class="tray">
    <svg width="16" height="16"><path d="M0 6h16v9H0z" fill="#d8d4cc"/><path d="M2 8.500h12M2 10.500h12M4 13h8" stroke="#555" stroke-dasharray="1 1"/><path d="M8 5q-2-3 1-3t5-1" fill="none" stroke="#aaa"/></svg>
    <svg width="16" height="16"><circle cx="8" cy="8" r="7" fill="#1424c8" stroke="#dde"/><path d="M6 6q0-3 3-2t0 4v2" fill="none" stroke="#fff" stroke-width="2"/><path d="M8 11h2v2H8z" fill="#fff"/></svg>
    <svg width="10" height="18"><path d="M3.500 1.500h5v3h-5zM1.500 3.500h4v3h-4z" fill="none" stroke="#fff"/><path d="M2 13h6l-3 3z" fill="#fff"/></svg>
    <svg width="8" height="6"><path d="M0 5l4-4 4 4z" fill="#e8f0ff"/></svg>
    <svg width="17" height="14"><path d="M0 13L11 1 9 13z" fill="#e01010"/><path d="M11 2l6 11-7-4z" fill="#20c040"/></svg>
    <svg width="16" height="16"><path d="M1.500 1v14" stroke="#fff"/><path d="M3 3h9v6H3z" fill="#fff"/><circle cx="11" cy="11" r="4.500" fill="#e02828"/><path d="M9 9l4 4M13 9l-4 4" stroke="#fff"/></svg>
    <svg width="16" height="16"><path d="M1 5h3l4-4v14l-4-4H1z" fill="#fff"/><path d="M10 5q2 3 0 6M12 3q4 5 0 10" fill="none" stroke="#fff"/></svg>
    <svg width="16" height="16"><path d="M4.500 4.500h10v8h-10zM6 15h8M1 3h5v3M2 0v3M5 0v3M3 6v8" fill="none" stroke="#fff" stroke-width="1.400"/></svg>
  </div>
  <time>15:57<br>2023/3/30</time>
  <button class="peek" aria-label="Show desktop"></button>
</footer>
</body>
</html>
```

FILE: styles.css
```css
:root {
  --teal: #54cfb0;
  --teal-light: #b4eedd;
  --teal-dark: #33695e;
  --aqua: #9adbdb;
  --aqua-light: #d0f8f4;
  --aqua-dark: #548888;
  --cream: #ffffcc;
  --amber: #fdc44f;
  --mono: "Liberation Mono", monospace;
  --serif: "Liberation Serif", serif;
  --ui: "Noto Sans", sans-serif;
}

*, *::before { box-sizing: border-box; }

body {
  margin: 0;
  min-height: 100vh;
  display: flex;
  flex-direction: column;
  background: #000;
  color: #000;
}

h1, h2, p { margin: 0; font-weight: normal; }
button { padding: 0; font: inherit; color: inherit; }
svg { display: block; }
.defs { position: absolute; width: 0; height: 0; }
.app-icon { width: 16px; height: 14px; }

/* Title bar */
.titlebar {
  display: flex;
  align-items: center;
  gap: 5px;
  height: 22px;
  background: linear-gradient(90deg, #a9bedd 0, #c5d1e0 12%, #a9c0df 21%, #5c90da 24%, #4f86d6 30%, #86a9dc 36%, #5a8edb 43%, #4e86d6 60%, #6a9ade 80%, #4e84d4 88%, #80abe6 100%);
  border-bottom: 1px solid #35507a;
}
.titlebar h1 { font: 13px/20px var(--ui); }
.win-controls {
  display: flex;
  align-self: flex-start;
  margin-left: auto;
  margin-right: 3px;
  border: 1px solid #50709c;
  border-top: 0;
  border-radius: 0 0 5px 5px;
}
.win-controls button {
  display: grid;
  place-items: center;
  width: 28px;
  height: 17px;
  border: 0;
  border-right: 1px solid #6a8cba;
  background: rgb(255 255 255 / 20%);
}
.win-controls .wide { width: 46px; border-right: 0; border-radius: 0 0 5px 0; }

/* Menu bar and brand */
.topbar { display: flex; height: 56px; background: var(--aqua-light); }
.menubar, .brand {
  display: flex;
  align-items: center;
  background: var(--aqua);
  border: 2px solid var(--aqua-dark);
  border-right-color: var(--aqua-light);
  border-bottom-color: var(--aqua-light);
}
.menubar {
  flex: 1;
  gap: 18px;
  padding: 0 14px 0 13px;
  font: bold 14px/20px var(--serif);
  box-shadow: inset 2px 2px #d0f8f4, inset -2px -2px #548888;
}
.menubar a { color: #000; text-decoration: none; }
.menubar u { text-underline-offset: 3px; text-decoration-thickness: 1px; }
.menubar .menu-help { margin-left: auto; }
.brand { width: 414px; padding-left: 3px; }
.logo { display: flex; align-items: center; width: 166px; }
.logo > svg { flex: none; }
.logo span {
  display: flex;
  align-items: center;
  font: italic bold 32px/32px "Liberation Sans", sans-serif;
  color: #00007c;
}
.product { display: flex; flex-direction: column; align-items: center; width: 134px; }
.product strong { font: bold 24px/28px var(--serif); white-space: nowrap; }
.product em { font: italic bold 14px/20px var(--serif); }
.date {
  align-self: flex-start;
  flex: 1;
  padding-top: 3px;
  text-align: center;
  white-space: nowrap;
  font: italic 15px/15px var(--mono);
}

/* Workspace */
.workspace { flex: 1; display: grid; grid-template-columns: 156px 1fr 163px; }

/* Layers */
.layers-panel {
  display: flex;
  flex-direction: column;
  margin-right: 1px;
  padding-top: 3px;
  background: var(--teal);
  border-left: 1px solid var(--aqua-light);
  font: bold 12px/14px var(--mono);
}
.job { margin: 0 2px; border: 1px solid #000; border-bottom: 0; }
.job p {
  height: 19px;
  padding-left: 1px;
  border-bottom: 1px solid #000;
  background: var(--aqua);
  font: 15px/20px var(--mono);
  white-space: nowrap;
}
.matrix { margin: 2px 2px 3px; padding: 2px; border: 1px solid #000; }
.matrix button {
  width: 100%;
  height: 21px;
  padding-left: 1px;
  text-align: left;
  background: var(--aqua);
  border: 2px solid var(--aqua-light);
  border-right-color: var(--aqua-dark);
  border-bottom-color: var(--aqua-dark);
  font: 15px/16px var(--mono);
}
.layer-well {
  flex: 1;
  padding: 1px 0 0 3px;
  border: 2px solid var(--teal-dark);
  border-right-color: var(--teal-light);
  border-bottom-color: var(--teal-light);
  border-left-width: 1px;
}
.layer-list {
  display: flex;
  flex-direction: column;
  gap: 3px;
  width: 122px;
  padding: 1px 2px 9px 1px;
  border: 1px solid #000;
  box-shadow: 2px 2px var(--teal-light);
}
.group { padding: 1px; background: #000; }
.layer {
  display: grid;
  grid-template-columns: 14px 14px 1fr;
  gap: 2px;
  height: 16px;
  padding: 1px;
}
.layer input {
  appearance: none;
  display: grid;
  place-items: center;
  width: 14px;
  height: 14px;
  margin: 0;
  background: #fff;
}
.layer input::before {
  content: "";
  width: 10px;
  height: 10px;
  border: 2px solid #000;
  background: #fff;
}
.layer input:checked { background: #0010a0; }
.layer input:checked::before { border-color: #000060; }
.layer .red { background: #f00; }
.layer .lime { background: #459b00; }
.layer span {
  display: flex;
  align-items: center;
  justify-content: space-between;
  min-width: 0;
  padding: 0 2px 0 1px;
  background: var(--aqua);
}
.white span { background: #fff; }
.green span { background: #00a57c; }
.amber span { background: var(--amber); }
.gold span { background: #d9aa00; }
.slate span { background: #9ab4bf; }
.grey span { background: #d8d8d8; }
.selected {
  height: 20px;
  margin: 2px 2px 3px;
  padding: 2px;
  background: var(--amber);
  border: 1px solid #000;
}

/* Drawing canvas */
.canvas { position: relative; min-width: 0; }
.board { width: 100%; }
.popview {
  position: absolute;
  display: flex;
  flex-direction: column;
  padding: 0 4px 5px 5px;
  border: 1px solid #a4a8aa;
  border-radius: 6px;
}
.pop1 {
  left: 458px;
  top: 140px;
  width: 440px;
  height: 374px;
  background: linear-gradient(90deg, transparent 0 40%, #050505 60%, #303234) 0 0 / 100% 26px no-repeat, linear-gradient(#34383a, #2a2c2e 30%, #050708 36%, #101314);
}
.pop2 {
  left: 1055px;
  top: 141px;
  width: 360px;
  height: 317px;
  background: linear-gradient(90deg, transparent 25%, #06090c 45% 52%, transparent 85%) 0 0 / 100% 26px no-repeat, linear-gradient(#6c6e70, #8a8c8e 20%, #d0d0d0 30%, #20242a 31%, #080a0c);
}
.popview header { display: flex; align-items: center; height: 26px; gap: 5px; }
.popview h2 {
  margin-left: -10px;
  padding: 0 18px 0 10px;
  font: 12px/24px var(--ui);
  background: radial-gradient(closest-side, rgb(200 200 200 / 60%) 40%, transparent);
}
.popview .app-icon { position: relative; z-index: 1; }
.pop-x {
  display: grid;
  place-items: center;
  align-self: flex-start;
  width: 48px;
  height: 19px;
  margin: -1px 0 0 auto;
  border: 1px solid #a4a8aa;
  border-top: 0;
  border-radius: 0 0 5px 5px;
  background: #222426;
}
.pop-x.hot { background: linear-gradient(#d8988c, #c05a48 45%, #a82410 50%, #d05038); border-color: #e0b0a8; }
.pop-client {
  flex: 1;
  display: flex;
  flex-direction: column;
  gap: 1px;
  padding: 1px;
  border: 1px solid #a4a8aa;
  border-radius: 2px;
  background: #000;
}
.pop-body { flex: 1; display: flex; gap: 1px; min-height: 0; }
.pop-view {
  flex: 1;
  min-width: 0;
  height: 100%;
  background: #000;
  border: 3px solid var(--teal-dark);
  border-right-color: var(--teal-light);
  border-bottom-color: var(--teal-light);
}
.pop-tools {
  display: flex;
  flex-direction: column;
  width: 35px;
  padding-top: 1px;
  background: var(--teal);
}
.pop-tools button {
  display: grid;
  place-items: center;
  flex: none;
  height: 35px;
  border: 1px solid #001a14;
  background: var(--teal);
  padding: 1px;
}
.pop-tools svg {
  width: 31px;
  height: 31px;
  padding: 3px;
  background: var(--aqua);
  border: 2px solid var(--aqua-light);
  border-right-color: var(--aqua-dark);
  border-bottom-color: var(--aqua-dark);
  outline: 1px solid #000;
  outline-offset: -6px;
}
.pop-foot { padding: 2px; background: var(--teal); }
.pop-foot button {
  display: block;
  width: 100%;
  height: 23px;
  background: var(--aqua);
  border: 2px solid var(--aqua-light);
  border-right-color: var(--aqua-dark);
  border-bottom-color: var(--aqua-dark);
  font: bold 15px/20px var(--mono);
}

/* Tool buttons */
.tools-panel { display: flex; flex-direction: column; border-left: 1px solid var(--teal-dark); }
.tools {
  display: grid;
  grid-template-columns: repeat(4, 39px);
  gap: 1px;
  padding: 1px 0;
  border-top: 1px solid var(--teal-dark);
  border-bottom: 2px solid var(--teal-light);
}
.tools button {
  display: grid;
  place-items: center;
  height: 39px;
  background: var(--aqua);
  border: 3px solid var(--aqua-light);
  border-right-color: var(--aqua-dark);
  border-bottom-color: var(--aqua-dark);
}
.tools svg { width: 30px; height: 30px; outline: 1px solid #000; outline-offset: -1px; }
.tools text, .prompt text { font-family: var(--mono); font-weight: bold; }
.tools .alert { border-color: #b42428; background: #d8c8c8; }
.edit { border-top-color: #808080; border-bottom-color: #5a7070; }
.edit button { background: #d0d0d0; border-color: #f0f0f0 #808080 #808080 #f0f0f0; }
.edit .plain { background: #fff; border-color: #e0e0e0 #808080 #808080 #e0e0e0; }
.edit .pick { background: var(--amber); border-color: #fbe0a4 #a08040 #a08040 #fbe0a4; }
.overview { flex: 1; display: grid; align-items: center; padding-right: 2px; border-top: 2px solid var(--teal-dark); }
.overview svg { width: 100%; }
.coords {
  height: 45px;
  padding: 7px 0 0 2px;
  background: var(--teal);
  border-top: 2px solid var(--teal-dark);
  border-bottom: 2px solid var(--teal-light);
  font: 15px/15px var(--mono);
  box-shadow: 0 -1px var(--teal-light);
}

/* Prompt line */
.prompt {
  display: flex;
  gap: 1px;
  height: 33px;
  padding: 0 1px 1px 1px;
  border-top: 1px solid #000;
  background: #000;
  font: bold 12px/33px var(--mono);
}
.mode {
  display: grid;
  place-items: center;
  width: 31px;
  border: 0;
  background: var(--cream);
}
.mode svg {
  width: 26px;
  height: 26px;
  padding: 1px;
  border: 2px solid #d0d0a0;
}
.mode.boxed { width: 30px; background: var(--teal); }
.mode.boxed svg { background: var(--cream); border-color: #f8f8d8 #989878 #989878 #f8f8d8; }
.prompt label { width: 47px; padding-left: 2px; background: var(--cream); }
.entry { width: 172px; padding: 2px; background: var(--cream); }
.entry input {
  display: block;
  width: 100%;
  height: 27px;
  border: 2px solid #98987c;
  border-right-color: #d8d8b0;
  border-bottom-color: #d8d8b0;
  background: repeating-linear-gradient(#000 0 1px, transparent 1px 2px) 5px 2px / 1px 16px no-repeat var(--cream);
}
.prompt output { flex: 1; padding-left: 4px; background: var(--cream); }
.units { width: 78px; margin-left: 1px; padding: 2px 3px 2px 6px; background: var(--teal); }
.units select {
  appearance: none;
  display: block;
  width: 100%;
  height: 27px;
  padding: 1px 4px 0;
  border: 2px solid var(--teal-light);
  border-right-color: #2f7a6a;
  border-bottom-color: #2f7a6a;
  border-radius: 0;
  background: linear-gradient(var(--teal-light), #2f8a74) right 5px center / 11px 6px no-repeat var(--teal);
  font: bold 15px/20px var(--mono);
  color: #000;
}
.status { height: 32px; padding: 2px; background: #e4ffff; border-top: 1px solid #789c9c; }
.status div { height: 28px; padding: 2px; border: 1px solid #000; background: #d0ffff; }
.status p { height: 22px; background: #b4ffff; border-right: 2px solid #609898; border-bottom: 2px solid #609898; }

/* Taskbar */
.taskbar {
  display: flex;
  gap: 4px;
  height: 40px;
  padding: 1px 1px 1px 7px;
  background: linear-gradient(#5b7da8 0, #254a7c 15%, #12376e 45%, #0a2858 100%);
}
.taskbar > button {
  display: grid;
  place-items: center;
  width: 58px;
  border: 1px solid #7d97b8;
  border-radius: 3px;
  background: linear-gradient(150deg, #7b93b3, #3d5f8e 45%, #1b4078 60%, #21487e);
}
.taskbar > button svg { width: 34px; height: 34px; }
.taskbar > .orb { width: 40px; margin-right: 8px; border: 0; background: none; }
.taskbar > .orb svg { width: 38px; height: 38px; }
.taskbar > .active { width: 52px; background: linear-gradient(150deg, #c8d0dc, #7b8daa 60%, #98a8c0); }
.tray { display: flex; align-items: center; gap: 9px; margin-left: auto; }
.taskbar time { width: 68px; margin-left: 10px; padding-top: 2px; text-align: center; color: #fff; font: 12px/18px var(--ui); }
.taskbar > .peek { width: 14px; border-radius: 0; background: linear-gradient(#7b93b3, #254a7c); }
```
